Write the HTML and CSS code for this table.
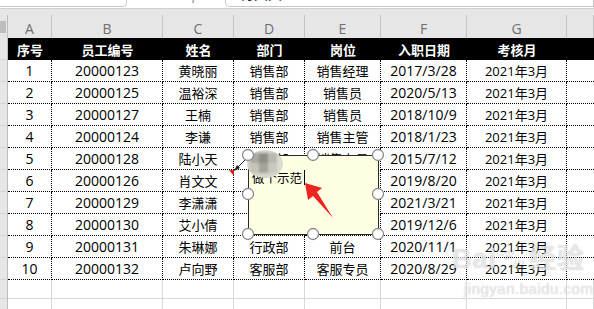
FILE: index.html
```html
<!DOCTYPE html>
<html lang="zh-CN">
<head>
<meta charset="utf-8">
<title>Sheet</title>
<link rel="stylesheet" href="styles.css">
</head>
<body>
<div class="app">
  <div class="fbar">
    <div class="namebox">Comment 1</div>
    <div class="fx"><span class="mag"></span><span class="fxt">fx</span></div>
    <div class="content">肖文文</div>
  </div>
  <div class="band"></div>
  <div class="row colhdr">
    <div class="rh corner"><span class="tri"></span></div>
    <div class="c">A</div><div class="c">B</div><div class="c">C</div><div class="c">D</div><div class="c">E</div><div class="c">F</div><div class="c">G</div><div class="c"></div>
  </div>
  <div class="row thead">
    <div class="rh"></div>
    <div class="c">序号</div><div class="c">员工编号</div><div class="c">姓名</div><div class="c">部门</div><div class="c">岗位</div><div class="c">入职日期</div><div class="c">考核月</div><div class="c"></div>
  </div>
  <div class="row data"><div class="rh"></div><div class="c n">1</div><div class="c n">20000123</div><div class="c">黄晓丽</div><div class="c">销售部</div><div class="c">销售经理</div><div class="c n">2017/3/28</div><div class="c">2021年3月</div><div class="c"></div></div>
  <div class="row data"><div class="rh"></div><div class="c n">2</div><div class="c n">20000125</div><div class="c">温裕深</div><div class="c">销售部</div><div class="c">销售员</div><div class="c n">2020/5/13</div><div class="c">2021年3月</div><div class="c"></div></div>
  <div class="row data"><div class="rh"></div><div class="c n">3</div><div class="c n">20000127</div><div class="c">王楠</div><div class="c">销售部</div><div class="c">销售员</div><div class="c n">2018/10/9</div><div class="c">2021年3月</div><div class="c"></div></div>
  <div class="row data"><div class="rh"></div><div class="c n">4</div><div class="c n">20000124</div><div class="c">李谦</div><div class="c">销售部</div><div class="c">销售主管</div><div class="c n">2018/1/23</div><div class="c">2021年3月</div><div class="c"></div></div>
  <div class="row data"><div class="rh"></div><div class="c n">5</div><div class="c n">20000128</div><div class="c">陆小天</div><div class="c">销售部</div><div class="c">销售专员</div><div class="c n">2015/7/12</div><div class="c">2021年3月</div><div class="c"></div></div>
  <div class="row data"><div class="rh"></div><div class="c n">6</div><div class="c n">20000126</div><div class="c">肖文文</div><div class="c">销售部</div><div class="c">销售员</div><div class="c n">2019/8/20</div><div class="c">2021年3月</div><div class="c"></div></div>
  <div class="row data"><div class="rh"></div><div class="c n">7</div><div class="c n">20000129</div><div class="c">李潇潇</div><div class="c">销售部</div><div class="c">销售员</div><div class="c n">2021/3/21</div><div class="c">2021年3月</div><div class="c"></div></div>
  <div class="row data"><div class="rh"></div><div class="c n">8</div><div class="c n">20000130</div><div class="c">艾小倩</div><div class="c">销售部</div><div class="c">销售员</div><div class="c n">2019/12/6</div><div class="c">2021年3月</div><div class="c"></div></div>
  <div class="row data"><div class="rh"></div><div class="c n">9</div><div class="c n">20000131</div><div class="c">朱琳娜</div><div class="c">行政部</div><div class="c">前台</div><div class="c n">2020/11/1</div><div class="c">2021年3月</div><div class="c"></div></div>
  <div class="row data"><div class="rh"></div><div class="c n">10</div><div class="c n">20000132</div><div class="c">卢向野</div><div class="c">客服部</div><div class="c">客服专员</div><div class="c n">2020/8/29</div><div class="c">2021年3月</div><div class="c"></div></div>
  <div class="row empty"><div class="rh"></div><div class="c"></div><div class="c"></div><div class="c"></div><div class="c"></div><div class="c"></div><div class="c"></div><div class="c"></div><div class="c"></div></div>
  <div class="row empty"><div class="rh"></div><div class="c"></div><div class="c"></div><div class="c"></div><div class="c"></div><div class="c"></div><div class="c"></div><div class="c"></div><div class="c"></div></div>

  <div class="comment"><span class="ctext">做个示范</span><span class="caret"></span></div>
  <svg class="overlay" width="594" height="309" viewBox="0 0 594 309">
    <defs>
      <filter id="bl" x="-20%" y="-20%" width="140%" height="140%"><feGaussianBlur stdDeviation="0.8"/></filter>
      <clipPath id="blob"><ellipse cx="265" cy="164" rx="18" ry="14"/></clipPath>
    </defs>
    <polygon points="229,170 234,170 234,176" fill="#e8191a"/>
    <line x1="237" y1="168" x2="249" y2="156" stroke="#222" stroke-width="1"/>
    <polygon points="234,171 240,168 237,165" fill="#222"/>
    <g clip-path="url(#blob)" filter="url(#bl)">
      <rect x="246" y="149" width="40" height="30" fill="#d6d6cc"/>
      <rect x="250" y="153" width="9" height="10" fill="#a9a9a0"/>
      <rect x="259" y="153" width="9" height="10" fill="#8e8e86"/>
      <rect x="268" y="153" width="9" height="10" fill="#b8b8ae"/>
      <rect x="250" y="163" width="9" height="10" fill="#c4c4b8"/>
      <rect x="259" y="163" width="9" height="10" fill="#a4a498"/>
      <rect x="268" y="163" width="9" height="10" fill="#c8c8bc"/>
      <rect x="277" y="156" width="8" height="16" fill="#dcdcd0"/>
    </g>
    <polygon points="305,183 322,188 317,192 333,218 313,196 308,200" fill="#f0231e"/>
    <g class="h" fill="#fff" stroke="#8a8a8a" stroke-width="1.3">
      <circle cx="248" cy="155" r="5.5"/>
      <circle cx="313" cy="155" r="5.5"/>
      <circle cx="378" cy="155" r="5.5"/>
      <circle cx="248" cy="194" r="5.5"/>
      <circle cx="378" cy="194" r="5.5"/>
      <circle cx="248" cy="234" r="5.5"/>
      <circle cx="313" cy="234" r="5.5"/>
      <circle cx="378" cy="234" r="5.5"/>
    </g>
  </svg>
  <div class="wm">
    <div class="wm1">Bai<span class="paw">🐾</span>经验</div>
    <div class="wm2">jingyan.baidu.com</div>
  </div>
</div>
</body>
</html>
```
FILE: styles.css
```css
* { box-sizing: border-box; }
html, body { margin: 0; padding: 0; background: #fff; }
body { width: 594px; height: 309px; overflow: hidden; }
.app {
  position: relative;
  width: 594px;
  height: 309px;
  overflow: hidden;
  font-family: "Open Sans", "Noto Sans CJK SC", sans-serif;
  font-size: 13px;
  color: #000;
}
.fbar {
  height: 9px;
  border-bottom: 1px solid #cfcfcf;
  display: flex;
  align-items: flex-end;
  overflow: hidden;
  background: #fff;
  padding-bottom: 1px;
}
.namebox {
  width: 131px;
  height: 24px;
  flex: none;
  border: 1px solid #c6c6c6;
  border-top: none;
  border-radius: 0 0 5px 5px;
  margin-left: -4px;
  padding-left: 12px;
  font-size: 14px;
  line-height: 14px;
  padding-top: 4px;
  color: #222;
  letter-spacing: 1px;
}
.fx {
  width: 98px;
  flex: none;
  height: 24px;
  display: flex;
  align-items: flex-end;
  padding-left: 50px;
  gap: 4px;
  color: #9a9a9a;
}
.mag {
  width: 11px; height: 11px;
  border: 1.5px solid #a8a8a8;
  border-radius: 50%;
  margin-bottom: 7px;
}
.fxt { font-style: italic; font-size: 16px; line-height: 16px; margin-bottom: 5px; font-family: "Liberation Serif", serif; }
.content {
  flex: 1;
  height: 24px;
  border: 1px solid #c6c6c6;
  border-top: none;
  border-radius: 0 0 0 5px;
  padding-left: 14px;
  font-size: 14px;
  line-height: 14px;
  padding-top: 4px;
  color: #222;
}
.band { height: 6px; background: #e6e6e6; }
.row {
  display: grid;
  grid-template-columns: 8px 44px 111px 71px 71px 76px 86px 100px 1fr;
  height: 22px;
}
.c {
  display: flex;
  align-items: center;
  justify-content: center;
  white-space: nowrap;
  overflow: visible;
}
.rh { background: #e6e6e6; border-right: 1px solid #bcbcbc; border-bottom: 1px solid #d2d2d2; }
.colhdr { height: 23px; background: #e6e6e6; }
.colhdr .c {
  border-right: 1px solid #c6c6c6;
  color: #6f6f6f;
  font-size: 14px;
  padding-top: 3px;
}
.colhdr .rh { border-bottom: none; position: relative; }
.tri { position: absolute; right: 1px; top: 6px; width: 6px; height: 12px; background: #bdbdbd; }
.thead .c { background: #000; color: #fff; font-weight: bold; font-size: 13px; }
.data .c { border-right: 1px dotted #000; border-bottom: 1px dotted #000; }
.data .c:last-child { border-right: none; }
.data .n { font-size: 14px; }
.empty { height: 19px; }
.empty + .empty { height: 22px; }
.empty .c { border-right: 1px solid #d9d9d9; border-bottom: 1px solid #d9d9d9; }

.comment {
  position: absolute;
  left: 248px;
  top: 155px;
  width: 131px;
  height: 80px;
  background: #ffffe3;
  border: 1px solid #2a2a2a;
  padding: 14px 0 0 3px;
  font-size: 12.5px;
  line-height: 16px;
  display: flex;
  align-items: flex-start;
  font-family: "Noto Sans CJK SC", sans-serif;
}
.caret { width: 1px; height: 15px; background: #000; margin-left: 2px; }
.overlay { position: absolute; left: 0; top: 0; }
.wm {
  position: absolute;
  left: 452px;
  top: 246px;
  color: rgba(255,255,255,0.6);
  text-shadow: 0 0 1px rgba(140,140,140,0.3), 0 0 1px rgba(140,140,140,0.3);
  font-family: "Liberation Sans", "Noto Sans CJK SC", sans-serif;
  font-weight: bold;
  line-height: 1;
}
.wm1 { font-size: 27px; letter-spacing: 1px; display: flex; align-items: center; gap: 2px; }
.paw { font-size: 22px; opacity: 0.2; filter: grayscale(1); }
.wm2 { font-size: 15px; margin-top: 8px; margin-left: 12px; font-weight: normal; letter-spacing: 0.5px; }
```
